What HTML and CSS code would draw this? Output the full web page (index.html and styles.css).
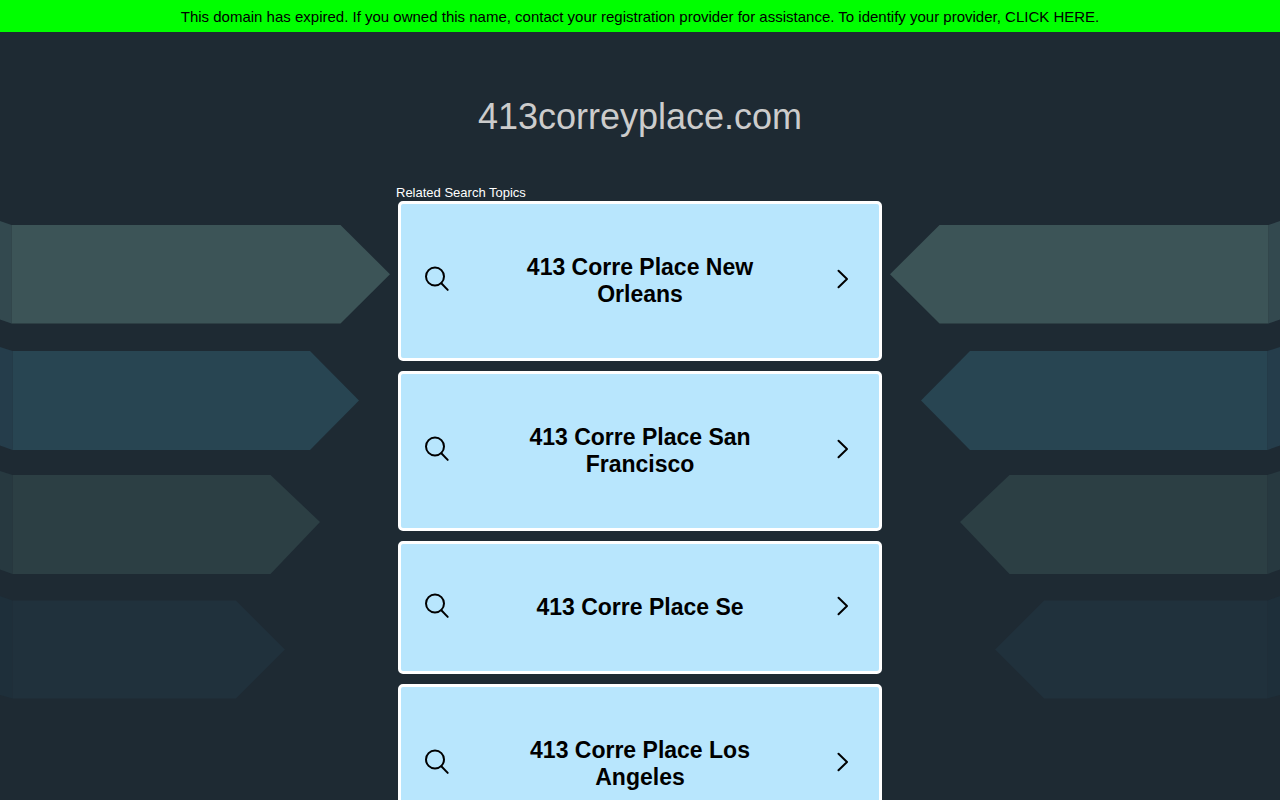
FILE: index.html
```
<!DOCTYPE html>
<html lang="en">
<head>
    <meta charset="UTF-8">
    <meta name="viewport" content="width=device-width, initial-scale=1.0">
    <title>413correyplace.com</title>
    <link rel="stylesheet" href="styles.css">
</head>
<body>
    <svg class="sprite" aria-hidden="true">
        <symbol id="arrows" viewBox="0 0 400 500">
            <path fill="#33494f" d="M0 1L11.500 5V103.500L0 99.500Z"/>
            <path fill="#3c5457" d="M11.500 5H340.500L390 54.300L340.500 103.500H11.500Z"/>
            <path fill="#253d4b" d="M0 127L12.500 131V230L0 225.500Z"/>
            <path fill="#284552" d="M12.500 131H310L359 180.500L310 230H12.500Z"/>
            <path fill="#273940" d="M0 251L12.500 255V354L0 349.500Z"/>
            <path fill="#2c3f44" d="M12.500 255H270.500L320 302L270.500 354H12.500Z"/>
            <path fill="#1e2f3a" d="M0 376L12.500 380.500V478.500L0 475Z"/>
            <path fill="#20313c" d="M12.500 380.500H236L285 429.500L236 478.500H12.500Z"/>
        </symbol>
        <symbol id="search" viewBox="0 0 28 26">
            <circle cx="11" cy="8.500" r="9"/>
            <path d="M17.300 15.300L23.700 21.900"/>
        </symbol>
        <symbol id="chevron" viewBox="0 0 28 26">
            <path d="M10.500 2.800L19 11L10.500 19.200"/>
        </symbol>
    </svg>

    <div class="banner">
        This domain has expired. If you owned this name, contact your registration provider for assistance. To identify your provider, <a href="#">CLICK HERE.</a>
    </div>

    <div class="page">
        <svg class="arrows arrows-left" aria-hidden="true"><use href="#arrows"/></svg>
        <svg class="arrows arrows-right" aria-hidden="true"><use href="#arrows"/></svg>

        <h1>413correyplace.com</h1>

        <main class="topics">
            <h2>Related Search Topics</h2>
            <ul class="topic-list">
                <li>
                    <a class="topic" href="#">
                        <svg class="icon" aria-hidden="true"><use href="#search"/></svg>
                        <span class="topic-name">413 Corre Place New Orleans</span>
                        <svg class="icon" aria-hidden="true"><use href="#chevron"/></svg>
                    </a>
                </li>
                <li>
                    <a class="topic" href="#">
                        <svg class="icon" aria-hidden="true"><use href="#search"/></svg>
                        <span class="topic-name">413 Corre Place San Francisco</span>
                        <svg class="icon" aria-hidden="true"><use href="#chevron"/></svg>
                    </a>
                </li>
                <li>
                    <a class="topic" href="#">
                        <svg class="icon" aria-hidden="true"><use href="#search"/></svg>
                        <span class="topic-name">413 Corre Place Se</span>
                        <svg class="icon" aria-hidden="true"><use href="#chevron"/></svg>
                    </a>
                </li>
                <li>
                    <a class="topic" href="#">
                        <svg class="icon" aria-hidden="true"><use href="#search"/></svg>
                        <span class="topic-name">413 Corre Place Los Angeles</span>
                        <svg class="icon" aria-hidden="true"><use href="#chevron"/></svg>
                    </a>
                </li>
            </ul>
        </main>
    </div>
</body>
</html>
```
FILE: styles.css
```
* {
    margin: 0;
    padding: 0;
    box-sizing: border-box;
}

html {
    scrollbar-width: none;
}

body {
    background: #1e2a33;
    font-family: "Liberation Sans", Arial, sans-serif;
    color: #000;
}

a {
    color: inherit;
    text-decoration: none;
}

.sprite {
    display: none;
}

.banner {
    padding: 9px 8px 7px;
    background: #00ff00;
    font-size: 15px;
    line-height: 16px;
    text-align: center;
}

.page {
    position: relative;
    padding: 64px 0 40px;
    overflow: hidden;
}

/* Decorative arrows on both sides of the list */
.arrows {
    position: absolute;
    top: 188px;
    width: 400px;
    height: 500px;
}

.arrows-left {
    left: 0;
}

.arrows-right {
    right: 0;
    transform: scaleX(-1);
}

h1 {
    font-size: 36px;
    font-weight: normal;
    line-height: 42px;
    text-align: center;
    color: #ccc;
}

.topics {
    position: relative;
    max-width: 488px;
    margin: 47px auto 0;
}

h2 {
    padding-bottom: 1px;
    font-size: 13px;
    font-weight: normal;
    line-height: 15px;
    color: #fff;
}

.topic-list {
    display: flex;
    flex-direction: column;
    gap: 10px;
    padding: 0 2px;
    list-style: none;
}

.topic {
    display: flex;
    align-items: center;
    padding: 50px 23px;
    background: #b8e6fd;
    border: 3px solid #fff;
    border-radius: 5px;
}

.topic-name {
    flex: 1;
    padding: 0 60px;
    font-size: 23px;
    font-weight: bold;
    line-height: 27px;
    text-align: center;
}

.icon {
    flex: none;
    width: 28px;
    height: 26px;
    fill: none;
    stroke: #000;
    stroke-width: 2;
    stroke-linecap: round;
    stroke-linejoin: round;
}

/* The lens circle reaches just past its box */
.icon,
symbol {
    overflow: visible;
}
```
